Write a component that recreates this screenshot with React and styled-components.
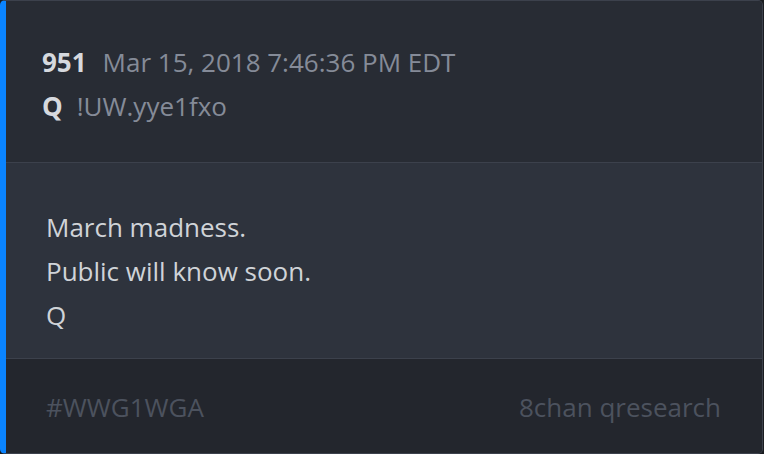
import styled, { createGlobalStyle } from 'styled-components';

const Global = createGlobalStyle`
    html, body {
        margin: 0;
        padding: 0;
        background: #1a1c20;
    }
    body {
        font-family: "Open Sans", "Noto Sans", sans-serif;
    }
`;

const Card = styled.div`
    box-sizing: border-box;
    width: 763px;
    height: 454px;
    display: flex;
    flex-direction: column;
    border: 1px solid #3c414c;
    border-left: 6px solid #0a84ff;
    border-radius: 5px;
    overflow: hidden;
    background: #282c34;
`;

const Header = styled.div`
    height: 162px;
    box-sizing: border-box;
    padding: 39px 36px 0;
    display: flex;
    flex-direction: column;
    border-bottom: 1px solid #3c414c;
    background: #282c34;
`;

const Line = styled.div`
    display: flex;
    align-items: baseline;
    gap: ${(p) => p.gap}px;
    font-size: 26px;
    line-height: 44px;
`;

const Strong = styled.span`
    font-weight: 700;
    color: #d6d9de;
`;

const Meta = styled.span`
    color: #858b98;
`;

const Body = styled.div`
    height: 196px;
    box-sizing: border-box;
    padding: 42px 40px 0;
    background: #2e333d;
    border-bottom: 1px solid #3c414c;
`;

const Paragraph = styled.p`
    margin: 0;
    font-size: 26px;
    line-height: 44px;
    color: #d0d3d8;
`;

const Footer = styled.div`
    flex: 1;
    display: flex;
    align-items: center;
    justify-content: space-between;
    padding: 2px 41px 0 40px;
    background: #23262d;
    font-size: 26px;
    color: #4c525e;
`;

export default function App() {
    const lines = ['March madness.', 'Public will know soon.', 'Q'];

    return (
        <>
            <Global />
            <Card>
                <Header>
                    <Line gap={16}>
                        <Strong>951</Strong>
                        <Meta>Mar 15, 2018 7:46:36 PM EDT</Meta>
                    </Line>
                    <Line gap={14}>
                        <Strong>Q</Strong>
                        <Meta>!UW.yye1fxo</Meta>
                    </Line>
                </Header>
                <Body>
                    {lines.map((l) => (
                        <Paragraph key={l}>{l}</Paragraph>
                    ))}
                </Body>
                <Footer>
                    <span>#WWG1WGA</span>
                    <span>8chan qresearch</span>
                </Footer>
            </Card>
        </>
    );
}
